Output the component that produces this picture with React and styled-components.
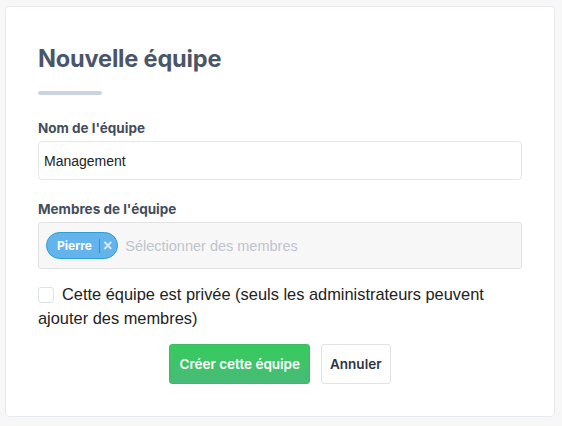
import React from "react";
import styled, { createGlobalStyle } from "styled-components";

const Global = createGlobalStyle`
  html, body { margin: 0; padding: 0; background: #f7f7f8; }
  body { font-family: "Liberation Sans", Arial, sans-serif; }
  * { box-sizing: border-box; }
`;

const Page = styled.div`
  padding: 6px 0 0 5px;
`;

const Card = styled.div`
  width: 550px;
  height: 411px;
  background: #fff;
  border: 1px solid #e6eaf0;
  border-radius: 4px;
  padding: 37px 32px 0 32px;
`;

const Title = styled.h1`
  margin: 0;
  font-family: Inter, "Liberation Sans", sans-serif;
  font-weight: 700;
  font-size: 23.6px;
  line-height: 30px;
  color: #4a5568;
  letter-spacing: -0.2px;
`;

const Bar = styled.div`
  width: 64px;
  height: 4px;
  border-radius: 2px;
  background: #cbd5e0;
  margin: 17px 0 24px;
`;

const Label = styled.label`
  display: block;
  font-family: Inter, "Liberation Sans", sans-serif;
  font-weight: 700;
  font-size: 13.5px;
  line-height: 18px;
  color: #444d5c;
  margin-bottom: 4px;
`;

const Field = styled.div`
  margin-bottom: ${(p) => p.$mb || 0}px;
`;

const Input = styled.div`
  width: 484px;
  height: 39px;
  border: 1px solid #e2e5ec;
  border-radius: 4px;
  padding: 0 5px;
  display: flex;
  align-items: center;
  font-size: 14px;
  color: #222;
  font-family: "Liberation Sans", Arial, sans-serif;
`;

const Select = styled.div`
  width: 484px;
  height: 47px;
  border: 1px solid #e2e2e2;
  border-radius: 3px;
  background: #f7f7f7;
  padding: 0 7px;
  display: flex;
  align-items: center;
  gap: 7px;
`;

const Tag = styled.span`
  display: inline-flex;
  align-items: center;
  height: 27px;
  padding: 0 5px 0 10px;
  border-radius: 14px;
  background: #63b3ed;
  border: 1px solid #2b9fcf;
  color: #fff;
  font-family: Inter, "Liberation Sans", sans-serif;
  font-weight: 700;
  font-size: 12px;
`;

const TagSep = styled.span`
  width: 1px;
  height: 14px;
  background: #3a8fc4;
  margin: 0 3px 0 7px;
`;

const TagX = styled.span`
  color: #d7ecfb;
  font-size: 16px;
  line-height: 1;
  font-family: "Liberation Sans", sans-serif;
`;

const Placeholder = styled.span`
  font-size: 14.5px;
  color: #c0c4cc;
  font-family: "Liberation Sans", Arial, sans-serif;
`;

const CheckRow = styled.div`
  font-size: 16.4px;
  line-height: 24px;
  color: #222;
  font-family: "Liberation Sans", Arial, sans-serif;
  margin-top: 13px;
  width: 484px;
`;

const Box = styled.span`
  display: inline-block;
  width: 16px;
  height: 16px;
  border: 1px solid #dde1e8;
  border-radius: 3px;
  background: #fff;
  vertical-align: -3px;
  margin-right: 8px;
`;

const Actions = styled.div`
  display: flex;
  justify-content: center;
  gap: 11px;
  margin-top: 14px;
`;

const Button = styled.button`
  height: 40px;
  padding: 0 ${(p) => (p.$primary ? 9 : 8)}px;
  border-radius: 3px;
  font-family: Inter, "Liberation Sans", sans-serif;
  font-weight: 600;
  font-size: 13.5px;
  cursor: pointer;
  border: 1px solid ${(p) => (p.$primary ? "#3fb868" : "#e2e2e2")};
  background: ${(p) =>
    p.$primary ? "linear-gradient(#36cb5c, #48bb78)" : "#fff"};
  color: ${(p) => (p.$primary ? "#fff" : "#2d3340")};
`;

export default function App() {
  return (
    <>
      <Global />
      <Page>
        <Card>
          <Title>Nouvelle équipe</Title>
          <Bar />
          <Field $mb={20}>
            <Label>Nom de l'équipe</Label>
            <Input>Management</Input>
          </Field>
          <Field>
            <Label>Membres de l'équipe</Label>
            <Select>
              <Tag>
                Pierre
                <TagSep />
                <TagX>×</TagX>
              </Tag>
              <Placeholder>Sélectionner des membres</Placeholder>
            </Select>
          </Field>
          <CheckRow>
            <Box />
            Cette équipe est privée (seuls les administrateurs peuvent ajouter
            des membres)
          </CheckRow>
          <Actions>
            <Button $primary>Créer cette équipe</Button>
            <Button>Annuler</Button>
          </Actions>
        </Card>
      </Page>
    </>
  );
}
